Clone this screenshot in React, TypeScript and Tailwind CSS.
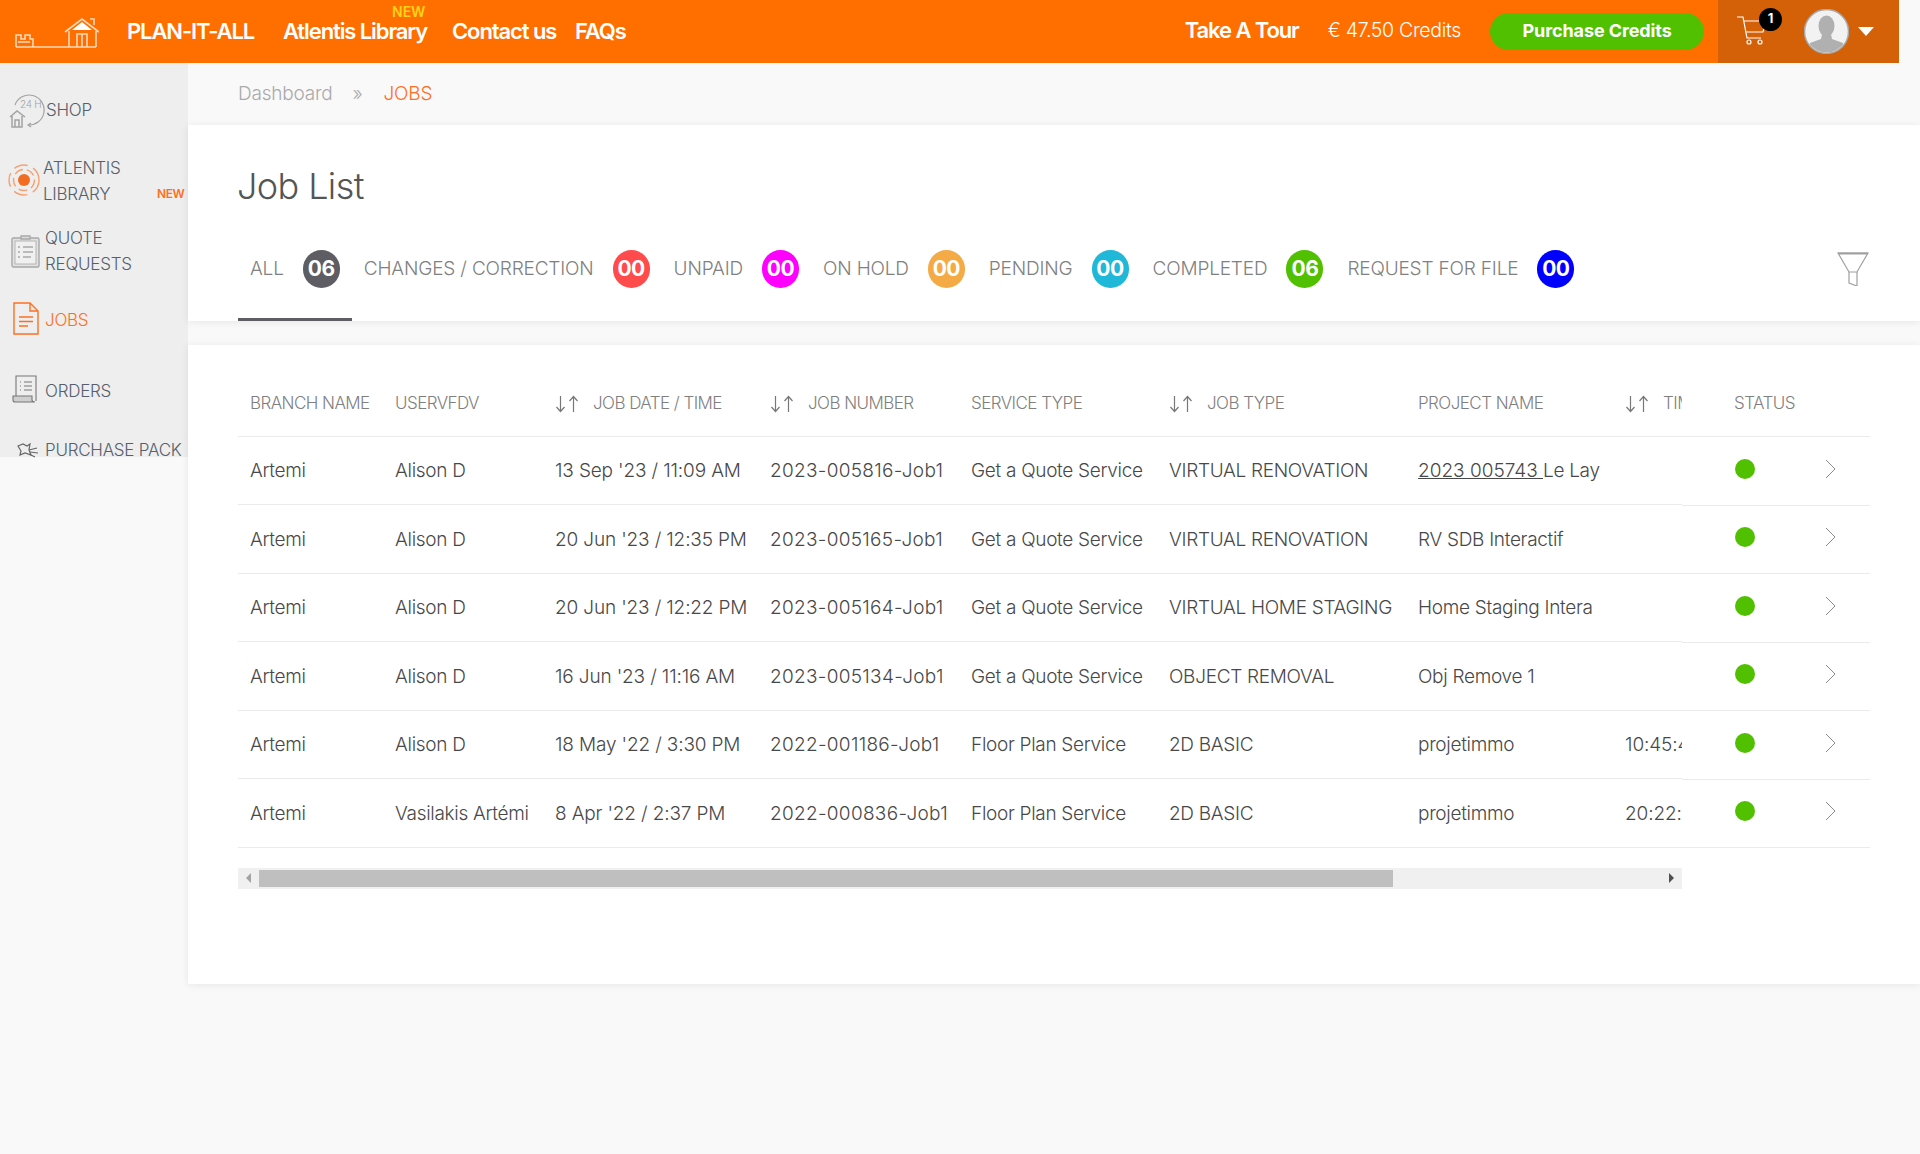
const font = { fontFamily: "Inter, 'Liberation Sans', sans-serif" };

const tabs = [
  { label: "ALL", count: "06", color: "bg-[#5d5d63]", active: true },
  { label: "CHANGES / CORRECTION", count: "00", color: "bg-[#ff4b4b]" },
  { label: "UNPAID", count: "00", color: "bg-[#ff00ff]" },
  { label: "ON HOLD", count: "00", color: "bg-[#f5ab45]" },
  { label: "PENDING", count: "00", color: "bg-[#20b8d8]" },
  { label: "COMPLETED", count: "06", color: "bg-[#50c000]" },
  { label: "REQUEST FOR FILE", count: "00", color: "bg-[#0000ff]" },
];

const rows = [
  ["Artemi", "Alison D", "13 Sep '23 / 11:09 AM", "2023-005816-Job1", "Get a Quote Service", "VIRTUAL RENOVATION", "Le Lay", ""],
  ["Artemi", "Alison D", "20 Jun '23 / 12:35 PM", "2023-005165-Job1", "Get a Quote Service", "VIRTUAL RENOVATION", "RV SDB Interactif", ""],
  ["Artemi", "Alison D", "20 Jun '23 / 12:22 PM", "2023-005164-Job1", "Get a Quote Service", "VIRTUAL HOME STAGING", "Home Staging Intera", ""],
  ["Artemi", "Alison D", "16 Jun '23 / 11:16 AM", "2023-005134-Job1", "Get a Quote Service", "OBJECT REMOVAL", "Obj Remove 1", ""],
  ["Artemi", "Alison D", "18 May '22 / 3:30 PM", "2022-001186-Job1", "Floor Plan Service", "2D BASIC", "projetimmo", "10:45:45"],
  ["Artemi", "Vasilakis Artémi", "8 Apr '22 / 2:37 PM", "2022-000836-Job1", "Floor Plan Service", "2D BASIC", "projetimmo", "20:22:45"],
];

const columns = [
  { label: "BRANCH NAME", width: "w-[145px]", cell: "tracking-[-0.3px]" },
  { label: "USERVFDV", width: "w-[160px]", cell: "tracking-[-0.3px]" },
  { label: "JOB DATE / TIME", width: "w-[215px]", cell: "tracking-[-0.15px]", sort: true },
  { label: "JOB NUMBER", width: "w-[201px]", cell: "tracking-[0.3px]", sort: true },
  { label: "SERVICE TYPE", width: "w-[198px]", cell: "tracking-[-0.3px]" },
  { label: "JOB TYPE", width: "w-[249px]", cell: "tracking-[-0.3px]", sort: true },
  { label: "PROJECT NAME", width: "w-[207px]", cell: "tracking-[-0.3px]" },
  { label: "TIME", width: "w-[200px]", cell: "tracking-[-0.1px]", sort: true },
];

const SortIcon = () => (
  <svg width="24" height="18" viewBox="0 0 24 18" fill="none" stroke="#777" strokeWidth="1.2" className="mr-[14px] shrink-0">
    <path d="M5.5 1v15M1.5 12l4 4.5 4-4.5" />
    <path d="M18.5 17V2M14.5 6l4-4.5 4 4.5" />
  </svg>
);

const Logo = () => (
  <svg width="84" height="32" viewBox="0 0 84 32" fill="none" stroke="#ffd9b8" strokeWidth="1.6" className="ml-[15px] mt-[2px] shrink-0">
    <path d="M1 30h80M1 30V18h5v4h4v-4h5v4h3v8" />
    <path d="M3 25h12" />
    <path d="M54 30V14M81 30V14M50 15 67 2l17 13" />
    <path d="M57 13 67 5l10 8z" fill="#fff" stroke="none" />
    <path d="M62 30V17h10v13M67 17v13" />
    <path d="M75 2h4v6" />
  </svg>
);

const CartIcon = () => (
  <svg width="32" height="32" viewBox="0 0 32 32" fill="none" stroke="#fff" strokeWidth="1.2">
    <path d="M1 2h6l4 21h14" />
    <path d="M8 6h22l-3 11H10" />
    <circle cx="13" cy="27" r="2" />
    <circle cx="24" cy="27" r="2" />
  </svg>
);

const Avatar = () => (
  <svg width="45" height="45" viewBox="0 0 45 45">
    <defs>
      <clipPath id="avatar-clip">
        <circle cx="22.5" cy="22.5" r="21" />
      </clipPath>
    </defs>
    <circle cx="22.5" cy="22.5" r="22" fill="#f2f2f2" stroke="#a8a8a8" strokeWidth="1.5" />
    <g clipPath="url(#avatar-clip)" fill="#b0b0b0">
      <ellipse cx="22.5" cy="17" rx="8" ry="10.5" />
      <path d="M18 25h9l1 5 11 4v11H6V34l11-4z" />
    </g>
  </svg>
);

const ShopIcon = () => (
  <svg width="36" height="36" viewBox="0 0 36 36" fill="none" stroke="#a3a3a3" strokeWidth="1.2">
    <path d="M6 13A15 15 0 1 1 19 33" />
    <path d="M22 31l-3 2 3 2" />
    <text x="11" y="16" fontSize="10" fill="#a3a3a3" stroke="none" fontFamily="Inter, sans-serif">24 H</text>
    <path d="M1 25 8 19l8 6M3 24v11h10V24M6 35v-7h4v7" strokeWidth="1.5" />
  </svg>
);

const TargetIcon = () => (
  <svg width="32" height="32" viewBox="0 0 32 32" fill="none" stroke="#f4a070" strokeWidth="1.4" className="-mt-[2px]">
    <circle cx="16" cy="16" r="6" fill="#f26d21" stroke="none" />
    <circle cx="16" cy="16" r="10.5" strokeDasharray="9 4" />
    <circle cx="16" cy="16" r="15" strokeDasharray="14 6" />
  </svg>
);

const ClipboardIcon = () => (
  <svg width="30" height="34" viewBox="0 0 30 34" fill="none" stroke="#a8a8a8" strokeWidth="1.4">
    <rect x="1" y="4" width="27" height="29" rx="1.5" fill="#e2e2e2" />
    <rect x="4" y="7" width="21" height="23" fill="#f0f0f0" strokeWidth="0.8" />
    <path d="M10 5h9V2h-9z" fill="#ddd" />
    <path d="M7 13h2M12 13h10M7 18h2M12 18h10M7 23h2M12 23h8" />
  </svg>
);

const JobsIcon = () => (
  <svg width="26" height="33" viewBox="0 0 26 33" fill="none" stroke="#ff6f20" strokeWidth="1.4" className="-mt-[4px]">
    <path d="M1 1h16l8 8v23H1z" />
    <path d="M17 1v8h8" />
    <path d="M6 15h14M6 19.500h14M6 24h9" strokeWidth="1.6" />
  </svg>
);

const OrdersIcon = () => (
  <svg width="26" height="28" viewBox="0 0 26 28" fill="none" stroke="#777" strokeWidth="1.1" className="-mt-[4px]">
    <path d="M4 21V1h20v25" />
    <path d="M8 7h1M12 7h8M8 11h1M12 11h8M8 15h1M12 15h8" />
    <path d="M1 21h19v4c0 1 1 2 3 2H3c-1 0-2-1-2-2z" fill="#cfcfcf" />
  </svg>
);

const PackIcon = () => (
  <svg width="24" height="16" viewBox="0 0 24 16" fill="none" stroke="#666" strokeWidth="1.2">
    <path d="M3 4 8 2l4 2 3-2-1 6 2 5-6-2-5 2 1-4z" />
    <path d="M14 8l8-2M15 10l8 1M14 12l6 3" />
  </svg>
);

const sidebarItems = [
  { lines: ["SHOP"], icon: <ShopIcon />, box: "mt-[27px] h-[40px] pl-[9px]", gap: "ml-px" },
  { lines: ["ATLENTIS", "LIBRARY"], icon: <TargetIcon />, box: "mt-[25px] h-[52px] pl-[8px]", gap: "ml-[3px]", isNew: true },
  { lines: ["QUOTE", "REQUESTS"], icon: <ClipboardIcon />, box: "mt-[18px] h-[52px] pl-[11px]", gap: "ml-[4px]" },
  { lines: ["JOBS"], icon: <JobsIcon />, box: "mt-[23px] h-[40px] pl-[13px]", gap: "ml-[6px]", active: true },
  { lines: ["ORDERS"], icon: <OrdersIcon />, box: "mt-[31px] h-[40px] pl-[12px]", gap: "ml-[7px]" },
  { lines: ["PURCHASE PACK"], icon: <PackIcon />, box: "mt-[19px] h-[40px] pl-[15px]", gap: "ml-[6px]" },
];

export default function App() {
  return (
    <div style={font} className="min-h-screen overflow-hidden bg-[#f9f9f9]">
      {/* HEADER */}
      <header className="flex h-[63px] w-[1899px] items-center bg-[#ff6f00] text-white">
        <Logo />
        <nav className="ml-[28px] flex items-center pb-[2px] text-[22px] font-semibold leading-[24px] tracking-[-1.1px]">
          <span className="w-[156px]">PLAN-IT-ALL</span>
          <span className="relative w-[169px]">
            Atlentis Library
            <span className="absolute left-[109px] top-[-14px] text-[14px] leading-none tracking-[0px] text-[#ffd21a]">NEW</span>
          </span>
          <span className="w-[123px]">Contact us</span>
          <span>FAQs</span>
        </nav>
        <span className="ml-[559px] pb-[2px] text-[22px] font-semibold tracking-[-1.1px]">Take A Tour</span>
        <span className="ml-[29px] pb-px text-[19.500px] font-light tracking-[-0.3px]">€ 47.50 Credits</span>
        <button className="ml-[29px] flex h-[37px] w-[214px] items-center justify-center rounded-full bg-[#50c000] pb-[2px] text-[18px] font-bold tracking-[-0.1px]">
          Purchase Credits
        </button>
        <div className="ml-[14px] flex h-full flex-1 items-center bg-[#d46008] pl-[18px]">
          <div className="relative mt-[-2px]">
            <CartIcon />
            <span className="absolute left-[23px] top-[-7px] flex h-[23px] w-[23px] items-center justify-center rounded-full bg-black text-[13px] font-bold">1</span>
          </div>
          <div className="ml-[36px] flex items-center">
            <Avatar />
            <span className="ml-[9px] h-0 w-0 border-x-[8px] border-t-[9px] border-x-transparent border-t-white" />
          </div>
        </div>
      </header>

      <div className="flex">
        {/* SIDEBAR */}
        <aside className="h-[394px] w-[188px] shrink-0 bg-[#eeeeee] text-[17px] font-light leading-[26px] tracking-[-0.25px] text-[#56606c]">
          {sidebarItems.map((item) => (
            <div key={item.lines[0]} className={`relative flex items-center ${item.box} ${item.active ? "text-[#ff6f20]" : ""}`}>
              {item.icon}
              <div className={item.gap}>
                {item.lines.map((line) => (
                  <div key={line} className="whitespace-nowrap">{line}</div>
                ))}
              </div>
              {item.isNew && (
                <span className="absolute bottom-0 left-[157px] text-[12px] font-semibold tracking-[-0.4px] text-[#ff6f20]">NEW</span>
              )}
            </div>
          ))}
        </aside>

        {/* MAIN */}
        <main className="min-w-0 flex-1">
          <div className="flex h-[62px] items-center pl-[50px] text-[19px] font-light tracking-[-0.2px] text-[#aaaaaa]">
            <span>Dashboard</span>
            <span className="ml-[20px]">»</span>
            <span className="ml-[21px] text-[#ff6f20]">JOBS</span>
          </div>

          <section className="h-[196px] bg-white pl-[50px] pt-[35px] shadow-[0_1px_8px_rgba(0,0,0,0.08)]">
            <h1 className="-ml-px h-[52px] text-[36px] font-light leading-[52px] tracking-[-0.6px] text-[#555]">Job List</h1>
            <div className="flex h-[109px] justify-between pr-[51px]">
              <div className="flex">
                {tabs.map((tab) => (
                  <div
                    key={tab.label}
                    className={`flex items-center border-b-[3px] px-3 pt-[8px] ${tab.active ? "border-[#5d5d63]" : "border-transparent"}`}
                  >
                    <span className="text-[19px] font-light tracking-[-0.17px] text-[#808080]">{tab.label}</span>
                    <span className={`ml-[19px] flex h-[38px] w-[37px] items-center justify-center rounded-full text-[21px] font-bold tracking-[-0.5px] text-white ${tab.color}`}>
                      {tab.count}
                    </span>
                  </div>
                ))}
              </div>
              <svg width="32" height="34" viewBox="0 0 32 34" fill="none" stroke="#a0a0a0" strokeWidth="1.2" className="mt-[40px]">
                <path d="M1 1h30L20 20H12z" />
                <path d="M1 1.500h30" strokeWidth="2" />
                <path d="M12 20v11l8 3V20" />
              </svg>
            </div>
          </section>

          <section className="mt-[24px] h-[639px] bg-white pl-[50px] pt-[25px] shadow-[0_1px_8px_rgba(0,0,0,0.08)]">
            <div className="flex w-[1632px]">
              {/* SCROLLING COLUMNS */}
              <div className="w-[1444px] shrink-0">
                <div className="overflow-hidden">
                  <table className="w-[1575px] table-fixed border-collapse text-left">
                    <thead>
                      <tr className="h-[66px] border-b border-[#ebebeb]">
                        {columns.map((col) => (
                          <th key={col.label} className={`${col.width} px-3 pt-[2px] text-[17px] font-light tracking-[-0.55px] text-[#7f7f7f]`}>
                            <div className="flex items-center whitespace-nowrap">
                              {col.sort && <SortIcon />}
                              {col.label}
                            </div>
                          </th>
                        ))}
                      </tr>
                    </thead>
                    <tbody>
                      {rows.map((row, i) => (
                        <tr key={row[3]} className="h-[68.5px] border-b border-[#ebebeb] text-[19px] font-light text-[#484848]">
                          {row.map((cell, j) => (
                            <td key={j} className={`px-3 pt-[2px] whitespace-nowrap ${columns[j].cell}`}>
                              {j === 6 && i === 0 && <span className="tracking-[0px] underline">2023 005743 </span>}
                              {cell}
                            </td>
                          ))}
                        </tr>
                      ))}
                    </tbody>
                  </table>
                </div>
                {/* SCROLLBAR */}
                <div className="mt-[20px] flex h-[21px] items-center bg-[#f0f0f0]">
                  <div className="flex w-[21px] shrink-0 items-center justify-center">
                    <span className="h-0 w-0 border-y-[5px] border-r-[5px] border-y-transparent border-r-[#a3a3a3]" />
                  </div>
                  <div className="h-[17px] w-[1134px] bg-[#bfbfbf]" />
                  <div className="flex-1" />
                  <div className="flex w-[21px] shrink-0 items-center justify-center">
                    <span className="h-0 w-0 border-y-[5px] border-l-[5px] border-y-transparent border-l-[#505050]" />
                  </div>
                </div>
              </div>

              {/* FIXED COLUMNS */}
              <div className="flex-1">
                <div className="flex h-[67px] items-center border-b border-[#ebebeb] pl-[52px] pt-[2px] text-[17px] font-light tracking-[-0.55px] text-[#7f7f7f]">
                  STATUS
                </div>
                {rows.map((row) => (
                  <div key={row[3]} className="flex h-[68.5px] items-center border-b border-[#ebebeb] pb-[4px]">
                    <span className="ml-[53px] h-[20px] w-[20px] rounded-full bg-[#50c000]" />
                    <svg width="11" height="20" viewBox="0 0 11 20" fill="none" stroke="#8a8a8a" strokeWidth="1" className="ml-[70px]">
                      <path d="M1 1l9 9-9 9" />
                    </svg>
                  </div>
                ))}
              </div>
            </div>
          </section>
        </main>
      </div>
    </div>
  );
}
